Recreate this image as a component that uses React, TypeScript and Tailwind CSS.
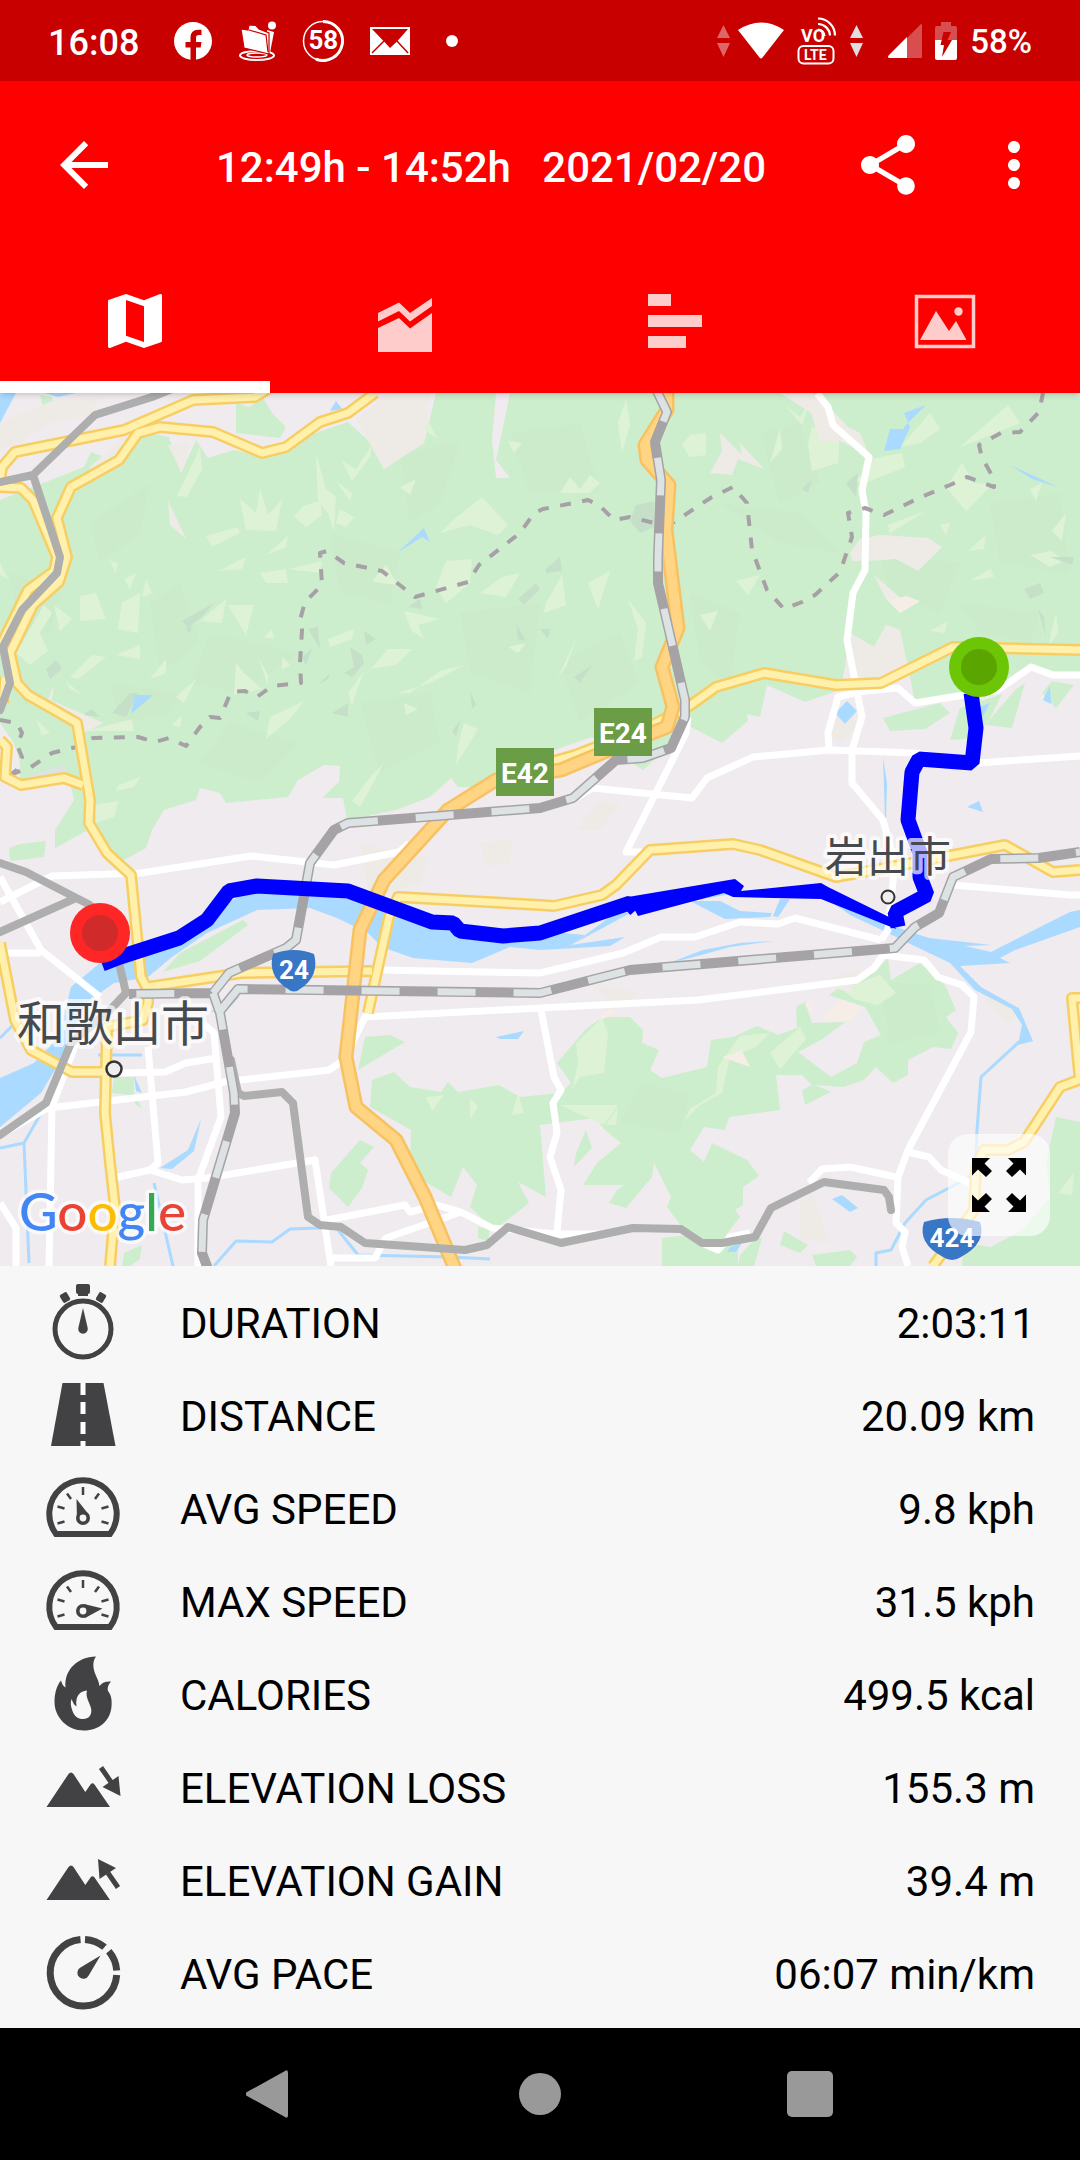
import type { ReactNode } from "react";
import { MdArrowBack, MdMap, MdMoreVert, MdShare } from "react-icons/md";

const stats = [
  { label: "DURATION", value: "2:03:11", icon: <StopwatchIcon /> },
  { label: "DISTANCE", value: "20.09 km", icon: <RoadIcon /> },
  { label: "AVG SPEED", value: "9.8 kph", icon: <GaugeIcon needle="M33.5 30L46.5 46.5L34 52Z" /> },
  { label: "MAX SPEED", value: "31.5 kph", icon: <GaugeIcon needle="M59.5 46.5L41 42L42 56Z" /> },
  { label: "CALORIES", value: "499.5 kcal", icon: <FlameIcon /> },
  { label: "ELEVATION LOSS", value: "155.3 m", icon: <MountainIcon shaft="M58 19.5L68 34" head="M77.5 48L59.5 39L75.5 28Z" /> },
  { label: "ELEVATION GAIN", value: "39.4 m", icon: <MountainIcon shaft="M75 46.5L65 32" head="M55 18L73 27L56.5 38Z" /> },
  { label: "AVG PACE", value: "06:07 min/km", icon: <PaceIcon /> },
];

const tabs = [
  { name: "Map", icon: <MdMap className="size-[72px]" /> },
  { name: "Charts", icon: <AreaIcon /> },
  { name: "Laps", icon: <BarsIcon /> },
  { name: "Photos", icon: <PhotoIcon /> },
];

function StatIcon({ children }: { children: ReactNode }) {
  return (
    <svg viewBox="0 0 80 80" className="size-20 shrink-0 text-[#424244]" fill="currentColor" aria-hidden="true">
      {children}
    </svg>
  );
}

function StopwatchIcon() {
  return (
    <StatIcon>
      <circle cx="40" cy="46" r="28" fill="none" stroke="currentColor" strokeWidth="5" />
      <path d="M35 1h10a2 2 0 0 1 2 2v6a2 2 0 0 1-2 2v2h-10v-2a2 2 0 0 1-2-2V3a2 2 0 0 1 2-2z" />
      <rect x="18" y="10" width="8" height="9" rx="1.5" transform="rotate(-30 22 14.5)" />
      <rect x="54" y="10" width="8" height="9" rx="1.5" transform="rotate(30 58 14.5)" />
      <path d="M40 25L44.7 45a4.8 4.8 0 1 1-9.4 0z" />
    </StatIcon>
  );
}

function RoadIcon() {
  return (
    <StatIcon>
      <path d="M19.5 7h41L72.5 70h-64.5z" />
      <path d="M37.5 7h5v12h-5zM37.5 26h5v12h-5zM37.5 46h5v12h-5zM37.5 65h5v5h-5z" fill="#fff" />
    </StatIcon>
  );
}

function GaugeIcon({ needle }: { needle: string }) {
  return (
    <StatIcon>
      <path d="M13 65A33.7 33.7 0 1 1 67 65Z" fill="none" stroke="currentColor" strokeWidth="6" />
      <path
        d="M40 18v8M24 24.5l4 5.5M56 24.5l-4 5.5M14.5 37.5l7 2M65.5 37.5l-7 2M14.5 54.5l7-2M65.5 54.5l-7-2"
        fill="none"
        stroke="currentColor"
        strokeWidth="2.5"
      />
      <path d={needle} />
      <circle cx="40" cy="49" r="5.2" fill="#f7f7f7" stroke="currentColor" strokeWidth="3.6" />
    </StatIcon>
  );
}

function FlameIcon() {
  return (
    <StatIcon>
      <path
        fillRule="evenodd"
        d="M53 1.5C48 8 51 17 54 23C56 27 56 29 56.5 31C60 27 63 26.5 68 26.5C65 30 64 33 65 36C68 40 69 44 68.6 50C68 66 56 75.5 41 75.5C24 75.5 11.5 62 11.5 47C11.5 38 14 30 18 25.5C19 29 20 31 22.500 32.5C21 15 34 2 53 1.5ZM44 35.5C37 36 32 41 33.5 51.5C30.5 50 30 47 28.5 44C27 48 28 52 29.5 56C31.5 61.5 35 64 40 64C46 64 49 60 48.2 54C47 48 42 42 44 35.5Z"
      />
    </StatIcon>
  );
}

function MountainIcon({ shaft, head }: { shaft: string; head: string }) {
  return (
    <StatIcon>
      <path d="M3.5 59L25.5 26Q28 23 30.5 26L42.3 44L47.5 36.5Q49.5 34 51.5 36.5L67 59Z" />
      <path d={shaft} fill="none" stroke="currentColor" strokeWidth="5" />
      <path d={head} />
    </StatIcon>
  );
}

function PaceIcon() {
  return (
    <StatIcon>
      <g fill="none" stroke="currentColor" strokeWidth="7">
        <path d="M37.5 5.5A33.3 33.3 0 1 0 73.7 41" />
        <path d="M42 5.4A33.3 33.3 0 0 1 61.5 13.2" />
        <path d="M65.8 17.3A33.3 33.3 0 0 1 73.7 36.5" />
      </g>
      <path d="M57.5 21.5L45.7 41.5A6 6 0 1 1 37.5 33.5Z" />
    </StatIcon>
  );
}

function AreaIcon() {
  return (
    <svg viewBox="0 0 72 72" className="size-[72px]" fill="currentColor" aria-hidden="true">
      <path d="M9 28L30 17.5L41 28L63 13v8L41 36.5L30 26L9 36.5z" />
      <path d="M9 43L30 33L41 43.5L63 28v39H9z" />
    </svg>
  );
}

function BarsIcon() {
  return (
    <svg viewBox="0 0 72 72" className="size-[72px]" fill="currentColor" aria-hidden="true">
      <path d="M9 9h23v12H9zM9 30h54v12H9zM9 51h38v12H9z" />
    </svg>
  );
}

function PhotoIcon() {
  return (
    <svg viewBox="0 0 72 72" className="size-[72px]" fill="currentColor" aria-hidden="true">
      <rect x="7.5" y="11.5" width="57" height="50" fill="none" stroke="currentColor" strokeWidth="3.5" />
      <path d="M11 55L27 26L40 46L47 36L57.5 55z" />
      <circle cx="49.5" cy="26.5" r="4.2" />
    </svg>
  );
}

function StatusBar() {
  return (
    <div className="flex h-[81px] items-center justify-between bg-[#c80000] px-12 font-medium">
      <div className="flex items-center gap-[26px]">
        <span className="mr-[9px] pt-1 text-[36px]">16:08</span>
        <svg viewBox="0 0 38 38" className="size-[38px]" aria-hidden="true">
          <circle cx="19" cy="19" r="19" fill="#fff" />
          <path d="M16.500 38V25.5H11.5V20H16.500V16C16.500 10.5 19.5 7.8 24 7.8H27.5V13H25C22.8 13 22 14 22 16V20H27.5L26.7 25.5H22V38Z" fill="#c80000" />
        </svg>
        <svg viewBox="0 0 38 40" className="h-10 w-[38px]" fill="#fff" aria-hidden="true">
          <ellipse cx="19" cy="34.500" rx="17" ry="4.500" fill="none" stroke="#fff" strokeWidth="2" />
          <ellipse cx="19" cy="34" rx="10" ry="2" fill="none" stroke="#fff" strokeWidth="1.5" />
          <path d="M29 9L36 11L32 32L29 33Z" />
          <path d="M3 8L10 9L11 4L18 4.5L21 8L31 12L31 33L6 27Z" stroke="#c80000" strokeWidth="1.2" />
          <path d="M11 9L28 14L30 31" stroke="#c80000" fill="none" strokeWidth="1.2" />
          <circle cx="34" cy="4.500" r="4" />
        </svg>
        <div className="relative flex size-[42px] items-center justify-center">
          <svg viewBox="0 0 42 42" className="absolute inset-0" fill="none" stroke="#fff" aria-hidden="true">
            <circle cx="21" cy="21" r="19.5" strokeWidth="1.5" />
            <path d="M21 1.5A19.5 19.5 0 1 1 14 39.2" strokeWidth="3" />
          </svg>
          <span className="text-[26px] font-bold">58</span>
        </div>
        <svg viewBox="0 0 40 28" className="h-7 w-10" aria-hidden="true">
          <path d="M0 0H40V28H0Z" fill="#fff" />
          <path d="M2 2H38L27 14.5L20 21L14 14.5Z" fill="#c80000" />
          <path d="M2 26L14 14M38 26L27 14" stroke="#c80000" fill="none" strokeWidth="1.5" />
        </svg>
        <span className="ml-[10px] size-3 rounded-full bg-white" />
      </div>
      <div className="flex items-center gap-[13px]">
        <div className="flex items-center gap-2">
          <svg viewBox="0 0 13 32" className="h-8 w-[13px]" fill="#fff" fillOpacity=".4" aria-hidden="true">
            <path d="M6.5 0L13 13H0ZM6.5 32L0 18H13Z" />
          </svg>
          <svg viewBox="0 0 46 37" className="h-[37px] w-[46px]" fill="#fff" aria-hidden="true">
            <path d="M0 8Q23 -7 46 8L24.5 35.5Q23 37.5 21.5 35.5Z" />
          </svg>
        </div>
        <svg viewBox="0 0 40 48" className="h-12 w-10" fill="none" stroke="#fff" aria-hidden="true">
          <rect x="1.5" y="29" width="35" height="17.5" rx="5" strokeWidth="2" />
          <path d="M21 1.5A17 17 0 0 1 38 18.5M21 7A12 12 0 0 1 33 18.5M21 12.5A7 7 0 0 1 27.5 19" strokeWidth="2.2" />
          <text x="4" y="25" fontSize="18" fontWeight="700" fill="#fff" stroke="none">VO</text>
          <text x="7" y="43" fontSize="14" fontWeight="700" fill="#fff" stroke="none">LTE</text>
        </svg>
        <svg viewBox="0 0 13 32" className="h-8 w-[13px]" fill="#e0dede" aria-hidden="true">
          <path d="M6.5 0L13 13H0ZM6.5 32L0 18H13Z" />
        </svg>
        <svg viewBox="0 0 34 34" className="ml-3 size-[34px]" fill="#fff" aria-hidden="true">
          <path d="M19 14L33 0Q34 0 34 1V33Q34 34 33 34H19Z" fillOpacity=".3" />
          <path d="M19 13V34H1Q-1 33 1 31Z" />
        </svg>
        <svg viewBox="0 0 22 38" className="h-[38px] w-[22px]" fill="#fff" aria-hidden="true">
          <path d="M0 18V6Q0 4 2 4H6V0H16V4H20Q22 4 22 6V18Z" fillOpacity=".3" />
          <path d="M0 18H22V36Q22 38 20 38H2Q0 38 0 36Z" />
          <path d="M8.5 10H16L12.5 18H17L7 35L9 23H5.5Z" fill="#c80000" />
        </svg>
        <span className="pt-[2px] text-[33px]">58%</span>
      </div>
    </div>
  );
}

const whiteRoads = [
  "M817 0L828 14L833 32L869 64L862 97L866 120L865 177L853 200L847 247L862 324L852 357V390L883 427L895 470L888 537L881 547",
  "M857 299L838 304L828 340L829 357M857 299L898 295L915 310L964 302L998 297L1031 274L1053 282H1080",
  "M573 407L592 395L692 405L707 385L753 364L829 357L915 360L977 370L1080 363M688 324L686 340L626 459H642",
  "M0 509L52 483L141 480L251 463L334 472L399 459L409 450",
  "M0 484L41 557L100 604M0 560H41",
  "M148 654L158 770L150 777L114 785M150 777L182 787L207 785L315 767L331 873",
  "M196 624L214 640L221 724L198 787V873",
  "M117 680L165 679L186 670L217 665",
  "M0 742L48 715L186 699L224 689L329 677L344 667L365 624L540 615L698 607L857 587L874 575L883 562L924 567L938 584L962 592L974 604L971 639L908 757L898 784L896 830L905 839L902 854L908 873",
  "M76 650L52 714L49 873M0 810L16 835V873",
  "M379 577L540 580L623 560L661 544H695L740 529L778 531L795 525L881 547",
  "M541 617L554 684L561 697L553 710L557 740L550 764L561 797L557 839",
  "M953 492L1070 502H1080M908 759L929 764L941 777L970 790",
  "M809 790L822 776L850 774L896 784",
  "M327 827L405 812L410 819L437 812L461 819L492 835L557 841H600M461 819L386 845L375 865H331M702 850L718 857L730 844L750 840",
];

const yellowRoads = [
  "M0 88L2 74L15 59L124 37L193 7L255 4L268 -4",
  "M375 0L348 20L320 29L286 54L262 60L213 39L160 34L138 40L119 67L71 94L57 125L67 164L59 189L33 212L10 260L17 290L28 302L77 330L90 407L89 430L107 460L131 482L141 584L148 597V610L143 627L107 634L105 720L110 770L115 814L110 873",
  "M0 94L21 95L33 107L57 164L54 178L28 197L0 254M5 284L3 310",
  "M0 347L7 354L5 384L21 392L64 385L83 392",
  "M0 550L15 627L31 657L72 679H105",
  "M148 594L241 580L372 578",
  "M368 620L389 524L398 504L540 512L554 513L602 502L616 492L650 457L733 451L760 457L836 484L912 470L1005 452L1053 479L1080 477",
  "M540 372L575 362L650 333L688 314L716 294L764 280L836 292L881 290L953 254L1080 257",
  "M1084 685L1060 694L1024 749L1008 757H984L976 774L974 817L933 873M1084 605H1072L1080 690",
];

const highway =
  "M667 -5V17L645 52L647 67L669 92L666 137L678 235L662 274L673 314L667 334L609 357L561 377L496 387L448 417L384 487L360 537L346 664L356 714L396 747L425 804L455 876";

const greyRoads = [
  "M172 -4L152 4L95 22L33 82L0 89",
  "M33 82L60 164L57 180L22 217L3 254L10 290L0 317",
  "M0 470L26 479L90 512M0 539L76 505",
  "M119 570L126 600L110 617L71 650L46 710L0 742",
  "M231 667L238 700L244 703L282 699L293 710L308 824L320 832L341 834L365 850L465 857L487 852L508 834L561 850L633 835L681 836L702 850H722L755 844L771 815L824 789L884 797L889 804L891 817",
];

const railways = [
  "M655 -6L667 19L655 49L661 87L658 164V190L685 307V324L671 355L643 365L616 367L573 405L540 415L348 430L334 437L310 470L296 547L286 555L229 580L213 600L129 601",
  "M213 600L220 620L234 700L235 720L203 827L202 860L208 876",
  "M220 618L238 596L540 600L630 577L895 555L915 534L939 520L953 484L991 466L1039 465L1080 459",
];

const borders = [
  "M10 382L31 374L52 360L76 354L93 345L138 344L155 349L169 345L186 353L200 334L210 324L220 325L231 299L245 298L257 304L272 293L301 290L300 270L302 237L300 227L305 209L322 192L320 160L327 158L344 170L382 178L415 204L468 189L479 172L520 140L534 120L543 116L588 107L599 112L614 127L630 124L654 130L674 129L712 104L733 94L747 110L752 157L767 197L784 216L802 209L815 202L840 179L852 144L848 120L865 115L884 122L919 105L950 92L967 84L994 94L993 84L982 65L979 52L1001 40L1020 39L1039 19L1043 0",
  "M0 327L17 330L22 340L17 352L22 364L17 377L10 382",
];

const forest = [
  "M0 107L84 74L91 59L107 65L148 40L169 44L181 80L196 47L208 65L234 57L262 64L286 50L348 29L373 52L384 76L424 50L436 0H496L492 47L496 85H510L496 67L506 20L510 0H1080V282L1053 284L1031 274L998 297L915 310L910 284L900 237L886 232L874 254L850 240L845 274L840 297L805 309L767 292L760 324L747 321L748 328L722 350L691 334L643 377L592 344L554 357L479 394H458L451 385L430 404L396 417L347 427L343 405H322L339 389L340 373L324 372L298 387L288 404L226 410L220 400L200 395L196 407L164 417L152 437L146 455L124 467L100 452L88 437L55 455V437L74 407L70 390L20 395V370L14 350L0 330Z",
  "M236 10L250 14L262 3L272 20L286 34L280 45L236 40ZM40 2L52 4L54 28L45 22ZM9 455L20 451L46 448L44 464L10 468Z",
  "M372 687L394 679L410 694L441 699L448 689L458 699L499 692L520 704L561 700L571 690L557 670L585 637L602 624H630L643 637L642 650L659 657L650 677L662 685L707 674L711 647L733 644L757 633L778 642L797 635L796 614L805 609L812 630L845 629L821 647L798 659L831 684L857 670L864 649L881 642L865 614L829 602L846 590L874 580L888 565L891 587L920 570L945 592L956 617L946 624L958 640L951 656L933 654L908 667V682L893 690L876 674L864 687L843 694L815 692L831 699L805 712L802 697L812 692L802 682H776L780 717L729 724L725 737L704 734L690 757L704 769L712 750L747 767L759 783L743 794V812L735 817L740 824L726 842L738 850V873H662V845L688 842L667 814L671 804L654 770L652 784L626 815L609 810L617 797L624 792H583L597 770L621 750L605 737L595 725L540 732L546 804L518 789L529 810L510 825L494 837L470 814L477 792L463 774L451 804L422 787L410 770L411 737L370 714Z",
  "M360 747L374 754L360 770L368 777L362 795L348 814L329 795L331 780ZM365 644L390 642L405 649L358 677ZM586 737L592 755L574 774L576 760ZM1056 724L1080 729V873H962L964 850L991 854L1022 837L1050 804L1046 770ZM740 862L756 845H762L754 873H738ZM784 838L808 852L800 860L780 852ZM812 862L850 857L857 864L850 873H816ZM114 684H134V700L142 715L136 712L130 702L112 700ZM478 834L490 836L488 848L478 845ZM124 860L142 852L140 866L130 873H122ZM163 579L180 560L243 527L248 532L200 568Z",
  "M883 325L940 310L950 320L925 336L890 338ZM950 347L960 315L1002 301L990 325L975 345ZM985 332L1015 297L1025 290L1012 335ZM1042 300L1052 288L1074 292L1056 315Z",
];

const meadow =
  "M177 103L192 72L200 54L202 76L187 104ZM240 106L256 120L260 96L268 122L282 106L276 138L246 137ZM316 61L326 96L336 104L334 138L328 120L318 108ZM342 68L356 76L372 52L370 64L352 88ZM336 88L352 100L350 108ZM303 113L320 108L322 122L306 134L294 124ZM340 116L354 124L346 134L336 130ZM400 94L416 86L410 102ZM482 104L508 132L498 142L470 132L440 140L452 128ZM206 143L238 134L240 140L212 154ZM266 162L288 143L286 154ZM218 178L246 164L242 176ZM260 180L286 176L288 190L266 190ZM288 176L322 168L320 180ZM80 203L96 200L106 226L80 228ZM110 168L118 170L116 180ZM124 186L136 180L130 196ZM122 210L140 200L138 240L118 236ZM146 186L152 200L142 204ZM228 212H254L246 242ZM200 228L226 206L222 230ZM264 244L272 236L274 246ZM116 262L140 252V266ZM70 284L92 262L106 264L78 286ZM16 260L44 212L52 220L40 240L48 258L30 272ZM54 212L72 226L60 238ZM150 286L166 266V280ZM176 304L196 286L184 310ZM236 270L244 280L262 296L234 302ZM258 264L268 282V292ZM282 264L290 272L282 276ZM328 246L354 236L352 246L330 254ZM270 324L304 308L290 326L266 346ZM366 282L388 256L412 256L396 272L370 276ZM348 300L364 278L352 312ZM398 300L430 290L464 272L440 278L410 300ZM404 310L418 316L406 322ZM446 168L472 166L470 190L446 210L436 194ZM480 200L502 184L520 180L506 204ZM404 218L440 226L418 232L424 246L412 238ZM372 188L386 172L398 192L380 190ZM458 352L464 330L478 336L456 372ZM352 408L372 382L384 370L360 414ZM118 392L140 384L134 394L116 398ZM94 412L118 408L114 424L96 430ZM172 332L182 322L180 334ZM36 326L50 340L42 342ZM86 338L132 326L134 338ZM508 254L526 250L518 260ZM0 170L8 186L0 182ZM66 288L82 302L70 296ZM420 34L428 28L438 46ZM508 48L522 50L514 60ZM690 42L706 40V62L690 64L682 52ZM770 70L780 34L782 56ZM812 34L840 40L838 70L812 78L808 52ZM870 66L902 60L905 74L860 92ZM870 88L846 92L862 82ZM560 100L570 84L580 96L590 82L600 90L590 100ZM546 210L562 182L566 212L544 220ZM588 190L610 178L598 216ZM736 188L760 182L748 202ZM700 222L718 218L710 238ZM628 206L646 230L642 264L634 268L638 236ZM576 246L566 274L558 284ZM962 70L974 90L992 92L966 118L946 94ZM888 132L926 118L890 140ZM940 132L950 130L946 142ZM968 158L986 142L984 156ZM1030 162L1052 158L1064 168L1050 174ZM1052 138L1066 120L1062 148ZM970 188L990 176L994 184ZM1030 96L1042 90L1036 108ZM900 54L930 20L940 36L920 50ZM660 270L672 262L670 280ZM930 238L948 228L944 240ZM1048 254L1056 220L1058 240ZM960 54L1008 12L1020 30L996 40ZM626 6L630 32L622 60L618 30ZM785 12L800 24L810 8L802 32ZM576 650L602 625L608 640L604 680L580 684L572 696L578 670ZM740 643L770 640L756 654L730 664L722 700L700 712L684 728L690 716L716 700L718 674ZM770 660L800 634L806 646L780 676ZM842 596L880 582L896 600L878 612L854 606ZM560 712L618 712L604 732ZM606 732L618 714L616 732ZM426 704L444 702L432 718ZM470 705L478 714L470 726ZM518 700L512 722L524 720ZM1058 800L1074 780L1072 802Z";

const rocks =
  "M182 228L214 210L202 224L188 234ZM46 276L56 267L62 276L50 286ZM112 320L130 300L138 300L126 324ZM82 322L92 316L100 324ZM308 236L318 234L320 256ZM302 264L312 256L306 272ZM364 238L376 246L366 252ZM350 254L362 262L364 270L352 284L344 280L354 274ZM318 292L330 280L328 286ZM332 320L348 310V324ZM408 214L420 206L422 216ZM246 320L260 318L258 328ZM516 230L526 248L518 246ZM470 298L476 312L472 316ZM452 338L460 328L456 344ZM518 206L536 190L540 196L524 212ZM546 176L560 164L562 178L546 180ZM636 112L654 108V134L640 140L630 128ZM802 96L812 86L808 100ZM846 90L858 80L856 104ZM1024 196L1040 190L1044 200L1030 206ZM1038 216L1044 224L1046 244ZM1050 164H1074L1072 172ZM574 284L592 272L580 290ZM540 236L550 236L548 246ZM186 236L192 230L190 240ZM26 310L24 296L28 316Z";

const shade =
  "M10 180L60 200L50 240L20 250ZM90 130L150 90L140 140L100 170ZM150 210L180 190L200 250L160 280ZM210 240L300 260L240 300L190 290ZM330 140L400 160L390 210L340 200ZM400 60L460 50L440 110L410 130ZM460 220L540 210L530 300L470 280ZM360 310L430 300L440 350L380 380ZM510 40L580 30L600 100L530 100ZM560 270L620 240L640 290L580 330ZM690 200L740 220L730 290L700 270ZM760 40L800 30L820 90L780 110ZM720 110L800 120L840 160L780 150ZM880 160L960 170L940 220L890 200ZM990 110L1060 100L1070 180L1000 170ZM960 210L1040 220L1030 250L980 240ZM230 330L300 350L260 390L200 370ZM110 290L180 300L170 320L120 330ZM640 690L690 700L680 740L620 730ZM880 590L930 590L940 640L890 650Z";

const settled = [
  "M780 0H812L833 18L848 34L860 40L869 62L840 48L820 48L811 20ZM720 40L742 62L740 50L764 76L738 66L732 82L710 80L722 58ZM850 160L860 146L880 142L928 145L942 154L918 178L896 166L868 168L852 168ZM874 182L902 206L920 208L900 220L886 206ZM846 275L848 240L874 254L886 232L900 238L910 284L880 292ZM168 108L174 120L186 146L170 132ZM54 292L48 306L90 324L103 330L84 340L50 318ZM168 52L190 50L182 80Z",
  "M0 30L52 8L100 5L90 22L50 30L20 50L0 56ZM90 74L120 46L140 38L120 64L90 86ZM356 26L390 0H430L424 50L384 76Z",
  "M575 437L600 408L620 412L600 437ZM860 332L840 350L830 342L838 312ZM480 450L512 446L510 470L486 474ZM360 450L430 465L420 490L370 505ZM590 590L640 600L620 615ZM820 590L860 575L850 600ZM990 600L1020 615L1010 630L985 610ZM800 810L812 800L830 850L800 846Z",
];

function Pin({ x, y, ring, core }: { x: number; y: number; ring: string; core: string }) {
  return (
    <g>
      <circle cx={x} cy={y} r="30" fill={ring} />
      <circle cx={x} cy={y} r="18" fill={core} />
    </g>
  );
}

function RouteMap() {
  return (
    <svg
      viewBox="0 0 1080 873"
      className="block h-auto w-full bg-[#efebee] font-[Roboto,sans-serif]"
      fill="none"
      strokeLinejoin="round"
      role="img"
      aria-label="Route map"
    >
      <path d={forest.join("")} fill="#cdeecd" />
      <path d={shade} fill="#cbebcb" />
      <path d={meadow} fill="#def2d6" />
      <path d={rocks} fill="#c6dfc8" />
      <path d={settled.join("")} fill="#eeebe7" />
      <path d="M820 628L840 606L862 614L850 628ZM722 664L742 658L750 674ZM598 628L610 614L618 620ZM805 612L812 606V620ZM888 208L906 203L920 208L900 220Z" fill="#f6ede6" />
      <path d="M28 383L64 372L68 385L38 386Z" fill="#dde3e5" />

      <g fill="#aadaff">
        <path d="M0 0H16L0 30ZM45 0H76L58 4ZM330 18L336 8L342 16ZM135 302H153L131 321ZM397 160L424 135L430 149L422 144ZM906 32L926 12L904 20L910 34L900 56L884 58L890 36L903 36ZM1010 72L1058 94L1032 86ZM835 320L847 308L857 318L845 331ZM1043 307L1050 293L1051 311ZM967 414L979 408L983 419ZM883 364L887 390L886 427H885ZM979 314L990 310L982 325Z" />
        <path d="M0 685L34 670L59 644L71 594L100 570L180 545L220 514L255 495L310 500L365 509L430 534L503 544L540 538L585 542L571 552L625 544L610 553L540 557L510 554L472 570L413 565L382 554L368 540L337 525L310 515L257 517L207 540L172 564L148 584L114 590L86 610L59 670L41 700L0 734Z" />
        <path d="M571 552L636 517L610 524L588 540ZM698 507L736 500L778 498L700 500ZM690 508L720 508L740 518L772 520L770 524L725 526ZM780 506H790L778 524L773 523ZM669 570L703 557L740 550L774 548L730 554L694 564ZM833 510L884 530L929 545L991 552L965 553L991 559L1040 534L1070 519L1080 517V534L1015 557L1000 565L1010 570L960 573L981 594L1013 612L1019 615L1033 648L1018 652L1022 632L1012 616L975 597L950 570L898 545L884 538L850 522ZM832 806L842 802L858 815L850 819ZM730 854L742 850L736 859H727ZM496 644L524 638L518 646L500 646Z" />
        <path d="M208 620L240 603L230 614ZM134 682L142 700L136 698ZM160 775L188 757L201 726L194 758L172 776Z" />
      </g>
      <g stroke="#aadaff" strokeWidth="3">
        <path d="M1020 648L981 684L977 737L976 760L970 784L926 807L905 830L891 857L876 860V873M0 755L24 750L44 715M24 750L29 870M154 790L173 873M214 873L236 848L272 849L290 836L345 834M338 837L358 862L450 864L490 866M98 662H142M0 645L20 625M374 520L385 545" />
      </g>

      <g stroke="#fff" strokeWidth="7">
        {whiteRoads.map((d) => <path key={d} d={d} />)}
      </g>
      <path d={borders.join("")} stroke="#a5a1a6" strokeWidth="4" strokeDasharray="11 11.5" />
      <path d={yellowRoads.join("")} stroke="#f8ce63" strokeWidth="12" />
      <path d={yellowRoads.join("")} stroke="#fff1ab" strokeWidth="7" />
      <path d={highway} stroke="#f8c161" strokeWidth="15" />
      <path d={highway} stroke="#ffd583" strokeWidth="10" />
      <path d={greyRoads.join("")} stroke="#aeaeae" strokeWidth="8" strokeLinecap="round" />
      <path d={railways.join("")} stroke="#a5a3a5" strokeWidth="10" />
      <path d={railways.join("")} stroke="#dde2e5" strokeWidth="7" strokeDasharray="38 38" />

      <g fontWeight="700" fill="#fff" textAnchor="middle">
        <rect x="496" y="355" width="58" height="48" fill="#6a9d45" />
        <text x="525" y="390" fontSize="28">E42</text>
        <rect x="594" y="315" width="58" height="48" fill="#6a9d45" />
        <text x="623" y="350" fontSize="28">E24</text>
        <path d="M273 561Q294 553 314 561Q320 583 300 596Q294 601 288 596Q267 583 273 561Z" fill="#3876c6" />
        <text x="294" y="586" fontSize="26">24</text>
        <path d="M924 829Q952 821 980 829Q987 850 961 864Q952 870 943 864Q917 850 924 829Z" fill="#3876c6" />
        <text x="952" y="854" fontSize="26">424</text>
      </g>

      <g stroke="#00f" strokeWidth="15" strokeLinejoin="bevel">
        <path d="M102 571L120 564L179 545L207 527L229 498L257 493L348 498L432 529L453 530L460 538L503 543L540 540L630 510L636 517" />
        <path d="M898 534L895 519L927 502L920 484V460L908 427L912 379L919 366L972 370L976 335L971 300" />
        <path d="M628 504L735 486L744 493L741 498L821 490L828 494L889 524L896 536L821 506L733 504L724 500L638 523Z" fill="#00f" stroke="none" />
      </g>
      <Pin x={979} y={274} ring="#6cc505" core="#5ba500" />
      <Pin x={100} y={540} ring="#ff2626" core="#d12a2a" />

      <g className="font-['Noto_Sans_CJK_JP',sans-serif]" fill="#464a4e" stroke="#fff" strokeOpacity=".7" strokeWidth="8" paintOrder="stroke">
        <text x="17" y="648" fontSize="48">和歌山市</text>
        <text x="825" y="479" fontSize="42">岩出市</text>
      </g>
      <circle cx="114" cy="676" r="7.5" fill="#eee" stroke="#333" strokeWidth="2.5" />
      <circle cx="888" cy="504" r="6.5" fill="#eee" stroke="#333" strokeWidth="2" />

      <text x="19" y="838" className="font-[Lato,sans-serif]" fontSize="53" fontWeight="500" stroke="#fff" strokeOpacity=".7" strokeWidth="7" paintOrder="stroke">
        <tspan fill="#4285f4">G</tspan>
        <tspan fill="#ea4335">o</tspan>
        <tspan fill="#fbbc05">o</tspan>
        <tspan fill="#4285f4">g</tspan>
        <tspan fill="#34a853">l</tspan>
        <tspan fill="#ea4335">e</tspan>
      </text>
    </svg>
  );
}

export default function App() {
  return (
    <div className="flex min-h-screen flex-col bg-[#f7f7f7] font-[Roboto,sans-serif] text-black">
      <header className="relative z-10 bg-[#ff0000] text-white shadow-md">
        <StatusBar />
        <div className="flex h-[168px] items-center pr-[30px] pl-12">
          <button type="button" aria-label="Back">
            <MdArrowBack className="size-[72px]" />
          </button>
          <h1 className="ml-24 flex-1 pt-1 text-[42px] font-medium whitespace-pre">12:49h - 14:52h   2021/02/20</h1>
          <div className="flex gap-[54px]">
            <button type="button" aria-label="Share">
              <MdShare className="size-[72px]" />
            </button>
            <button type="button" aria-label="More options">
              <MdMoreVert className="size-[72px]" />
            </button>
          </div>
        </div>
        <div className="grid h-36 grid-cols-4" role="tablist">
          {tabs.map((tab, i) => (
            <button
              key={tab.name}
              type="button"
              role="tab"
              aria-label={tab.name}
              aria-selected={i === 0}
              className="flex items-center justify-center border-y-12 border-transparent text-[#ffcccc] aria-selected:border-b-white aria-selected:text-white"
            >
              {tab.icon}
            </button>
          ))}
        </div>
      </header>

      <main className="flex-1">
        <div className="relative">
          <RouteMap />
          <button
            type="button"
            aria-label="Full screen"
            className="absolute right-[30px] bottom-[30px] flex size-[102px] items-center justify-center rounded-[20px] bg-white/65"
          >
            <svg viewBox="0 0 54 54" className="size-[54px]" fill="#000" aria-hidden="true">
              <path d="M0 0H18L12.5 5.5L20 13L14 19L6 11.5L0 17.5Z" />
              <path d="M54 0H36L41.5 5.5L34 13L40 19L48 11.5L54 17.5Z" />
              <path d="M0 54H18L12.5 48.5L20 41L14 35L6 42.5L0 36.5Z" />
              <path d="M54 54H36L41.5 48.5L34 41L40 35L48 42.5L54 36.5Z" />
            </svg>
          </button>
        </div>

        <dl className="pt-[10px] pb-2 text-[42px]">
          {stats.map((stat) => (
            <div key={stat.label} className="flex h-[93px] items-center pr-[45px] pl-[43px]">
              {stat.icon}
              <dt className="ml-[57px] pt-[2px]">{stat.label}</dt>
              <dd className="ml-auto pt-[2px]">{stat.value}</dd>
            </div>
          ))}
        </dl>
      </main>

      <nav className="grid h-[132px] grid-cols-3 bg-black px-[12.5%] text-[#999]">
        <button type="button" aria-label="Back" className="flex items-center justify-center">
          <svg viewBox="0 0 48 48" className="size-12" fill="currentColor" aria-hidden="true">
            <path d="M39 1Q42 -1 42 3V45Q42 49 39 47L1 26Q-2 24 1 22Z" />
          </svg>
        </button>
        <button type="button" aria-label="Home" className="flex items-center justify-center">
          <span className="size-[42px] rounded-full bg-current" />
        </button>
        <button type="button" aria-label="Recent apps" className="flex items-center justify-center">
          <span className="size-[46px] rounded-[5px] bg-current" />
        </button>
      </nav>
    </div>
  );
}
